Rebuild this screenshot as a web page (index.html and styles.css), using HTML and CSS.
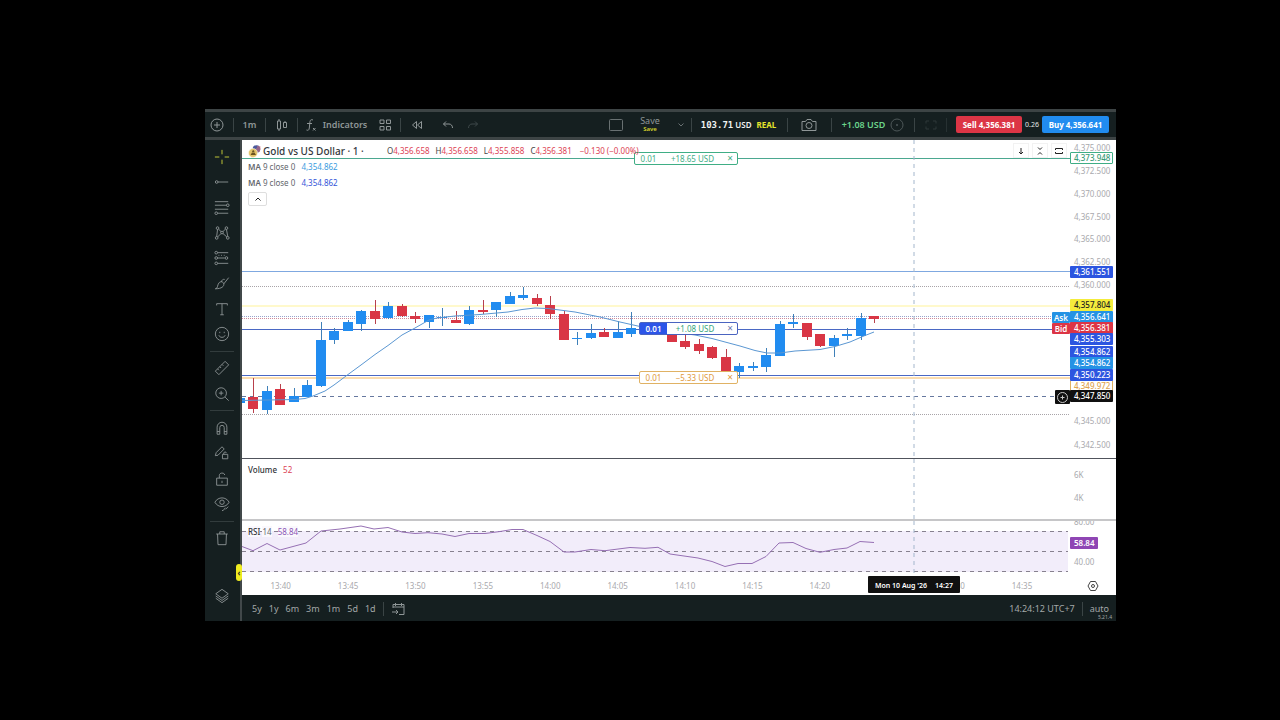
FILE: index.html
```html
<!DOCTYPE html>
<html lang="en">
<head>
<meta charset="utf-8">
<title>Gold vs US Dollar</title>
<link rel="stylesheet" href="styles.css">
</head>
<body>
<div class="app">
  <header class="topbar">
    <div class="group">
      <button class="tool add" aria-label="Add symbol"><svg width="14" height="14" viewBox="0 0 14 14"><circle cx="7" cy="7" r="6"/><path d="M7 4v6M4 7h6"/></svg></button>
      <span class="sep"></span>
      <button class="tool cell">1m</button>
      <span class="sep"></span>
      <button class="tool cell" aria-label="Candles"><svg width="12" height="14" viewBox="0 0 12 14"><path d="M1.500 3h3v8h-3zM3 1v2M3 11v2M7.500 4.500h3v5h-3zM9 3v1.500"/></svg></button>
      <span class="sep"></span>
      <button class="tool indicators"><svg width="12" height="14" viewBox="0 0 12 14"><path d="M8 2C5.500 1 5 2.500 4.800 5L4.300 10C4 12.500 3 12.500 1.500 12M2 5.500h5M8 10l2.500 2.500M10.500 10L8 12.500"/></svg>Indicators</button>
      <button class="tool cell" aria-label="Layouts"><svg width="12" height="12" viewBox="0 0 12 12"><path d="M1 1h4v3.500H1zM7.500 1h4v3.500h-4zM1 7.500h4V11H1zM7.500 7.500h4V11h-4z"/></svg></button>
      <span class="sep"></span>
      <button class="tool cell" aria-label="Replay"><svg width="12" height="10" viewBox="0 0 12 10"><path d="M5.500 1.500v7L1.500 5zM10.500 1.500v7L6.500 5z"/></svg></button>
      <button class="tool cell" aria-label="Undo"><svg width="12" height="10" viewBox="0 0 12 10"><path d="M4 1.500L1.500 4 4 6.500M1.500 4H7c2 0 3.500 1.500 3.500 4"/></svg></button>
      <button class="tool redo" aria-label="Redo"><svg width="12" height="10" viewBox="0 0 12 10"><path d="M8 1.500L10.500 4 8 6.500M10.500 4H5C3 4 1.500 5.500 1.500 8"/></svg></button>
    </div>
    <div class="group">
      <button class="tool square" aria-label="Layout setup"><svg width="14" height="12" viewBox="0 0 14 12"><rect x=".5" y=".5" width="13" height="11" rx="1"/></svg></button>
      <button class="tool save"><span>Save</span><b>Save</b></button>
      <button class="tool chevron" aria-label="Save menu"><svg width="6" height="4" viewBox="0 0 6 4"><path d="M.5 .5L3 3 5.500 .5"/></svg></button>
      <span class="sep"></span>
      <div class="balance"><b>103.71</b><strong>USD</strong><em>REAL</em></div>
      <span class="sep"></span>
      <button class="tool camera" aria-label="Snapshot"><svg width="16" height="14" viewBox="0 0 16 14"><path d="M1 3.500h3.500L6 1.500h4l1.500 2H15v9H1z"/><circle cx="8" cy="7.500" r="3"/></svg></button>
      <span class="sep"></span>
      <div class="profit">+1.08 USD<button class="tool dim" aria-label="Close positions"><svg width="14" height="14" viewBox="0 0 14 14"><circle cx="7" cy="7" r="6"/><path d="M6 7h2M7 6v2"/></svg></button></div>
      <span class="sep"></span>
      <button class="tool cell faint" aria-label="Fullscreen"><svg width="12" height="10" viewBox="0 0 12 10"><path d="M1 3.500V1h3M8 1h3v2.500M11 6.500V9H8M4 9H1V6.500"/></svg></button>
      <span class="sep faint"></span>
      <button class="order sell">Sell 4,356.381</button>
      <span class="spread">0.26</span>
      <button class="order buy">Buy 4,356.641</button>
    </div>
  </header>

  <div class="body">
    <nav class="sidebar">
      <div class="set eight">
        <button class="tool cross" aria-label="Crosshair"><svg viewBox="0 0 18 18"><path d="M9 1v5M9 12v5M1 9h5M12 9h5"/></svg></button>
        <button class="tool" aria-label="Trend line"><svg viewBox="0 0 18 18"><circle cx="3" cy="9" r="1.500"/><path d="M4.500 9H16"/></svg></button>
        <button class="tool" aria-label="Fibonacci"><svg viewBox="0 0 18 18"><path d="M1 3h15M1 7h13M1 11.500h15M4 16h12"/><circle cx="15.500" cy="7" r="1.500"/><circle cx="2.500" cy="16" r="1.500"/></svg></button>
        <button class="tool" aria-label="Patterns"><svg viewBox="0 0 18 18"><path d="M4 5l-1 8M5 4.500l3 3M10 7.500l3-3M14 5l1.500 8M4 13.500l4-4M10 9.500l4.500 4"/><circle cx="4" cy="3.500" r="1.500"/><circle cx="14" cy="3.500" r="1.500"/><circle cx="9" cy="8.500" r="1.500"/><circle cx="3" cy="14.500" r="1.500"/><circle cx="15.500" cy="14.500" r="1.500"/></svg></button>
        <button class="tool" aria-label="Prediction"><svg viewBox="0 0 18 18"><path d="M4 3h12M4 9h8M4 15h12"/><path d="M5 6h9" stroke-dasharray="1 2"/><circle cx="2.500" cy="3" r="1.500"/><circle cx="2.500" cy="9" r="1.500"/><circle cx="2.500" cy="15" r="1.500"/><circle cx="14" cy="9" r="1.500"/></svg></button>
        <button class="tool" aria-label="Brush"><svg viewBox="0 0 18 18"><path d="M1.500 15.500c3 0 2-4 4-6.500s5-1.500 5.500 1-2 5.500-9.500 5.500zM8 8c1-2.500 2-3.500 4-3M11 10l5.500-7"/></svg></button>
        <button class="tool" aria-label="Text"><svg viewBox="0 0 18 18"><path d="M3 5V3h12v2M9 3v12.500M7 15.500h4"/></svg></button>
        <button class="tool" aria-label="Emoji"><svg viewBox="0 0 18 18"><circle cx="9" cy="9" r="7.500"/><path d="M5.500 10.500c1 3 6 3 7 0M6.500 6.500v1.500M11.500 6.500v1.500"/></svg></button>
      </div>
      <span class="rule"></span>
      <div class="set two">
        <button class="tool" aria-label="Measure"><svg viewBox="0 0 18 18"><path d="M1.500 12.500l11-11 4 4-11 11zM4 10l1.500 1.500M6.500 7.500L8 9M9 5l1.500 1.500"/></svg></button>
        <button class="tool" aria-label="Zoom in"><svg viewBox="0 0 18 18"><circle cx="8" cy="8" r="6"/><path d="M12.500 12.500l4 4M8 5.500v5M5.500 8h5"/></svg></button>
      </div>
      <span class="rule"></span>
      <div class="set four">
        <button class="tool" aria-label="Magnet"><svg viewBox="0 0 18 18"><path d="M3.500 16V8a5.500 5.500 0 0 1 11 0v8h-3V8.500a2.500 2.500 0 0 0-5 0V16zM3.500 13h3M11.500 13h3"/></svg></button>
        <button class="tool" aria-label="Keep drawing"><svg viewBox="0 0 18 18"><path d="M1.500 12l1-3.500L9 2l2.500 2.500-7 7zM9.500 10.500h6v5h-6zM11 10.500V9c0-1.500 3-1.500 3 0"/></svg></button>
        <button class="tool" aria-label="Lock drawings"><svg viewBox="0 0 18 18"><path d="M3 8h12v8H3zM6 8V5c0-3.500 6-3.500 6-.5M9 11v2.500"/></svg></button>
        <button class="tool" aria-label="Hide drawings"><svg viewBox="0 0 18 18"><path d="M1 7c3.500-6.500 12.500-6.500 16 0-3.500 6.500-12.500 6.500-16 0z"/><circle cx="9" cy="7" r="2.500"/><path d="M9 16.500c3 0 2-3 4-3M13 15l3-3"/></svg></button>
      </div>
      <span class="rule"></span>
      <div class="set one">
        <button class="tool" aria-label="Remove"><svg viewBox="0 0 18 18"><path d="M2.500 4.500h13M6.500 4.500v-2.500h5v2.500M4 4.500l.5 12h9l.5-12"/></svg></button>
      </div>
      <button class="tool layers" aria-label="Object tree"><svg viewBox="0 0 18 18"><path d="M9 1.500l7 5-7 5-7-5zM2 9l7 5 7-5M2 11.500l7 5 7-5"/></svg></button>
      <button class="handle" aria-label="Collapse panel">‹</button>
    </nav>

    <main class="main">
      <section class="pane price">
        <div class="plot">
          <svg class="canvas" viewBox="242 140 828 318" preserveAspectRatio="none">
            <path class="l-teal" d="M242 158.500H1070"/>
            <path class="l-pale" d="M242 271.500H1070"/>
            <path class="l-dot" d="M242 286.500H1070M242 414.500H1070"/>
            <path class="l-yellow" d="M242 306H1070"/>
            <path class="l-dot ask-line" d="M242 316.500H1070"/>
            <path class="l-dot bid-line" d="M242 318.500H1070"/>
            <path class="l-orange" d="M242 378H1070"/>
            <path class="l-blue" d="M242 329.500H1070M242 375.500H1070"/>
            <path class="l-dash" d="M242 396.500H1070"/>
            <g id="candles"></g>
            <path class="l-ma" d="M242 400.500L295 399.500 305 398.500 313 396 325 391 334 385 348 374.500 361 365 375 354.500 388 345.500 402 335 415 328 429 320 437 318 455 316 480 314.500 508 312 522 309.500 535 308 548 308.500 575 312 600 317 620 322 640 326.500 665 331 695 335 712 338.500 740 346 755 350.500 767 353 780 353 795 351 820 349.500 835 346.500 850 342 865 335.500 874 332"/>
            <path class="l-cross" d="M914 140V458"/>
          </svg>
          <div class="tag take"><b>0.01</b><span>+18.65 USD</span><button aria-label="Cancel take profit">×</button></div>
          <div class="tag position"><b>0.01</b><span>+1.08 USD</span><button aria-label="Close position">×</button></div>
          <div class="tag stop"><b>0.01</b><span>−5.33 USD</span><button aria-label="Cancel stop loss">×</button></div>
          <div class="legend">
            <div class="title">
              <svg width="13" height="13" viewBox="0 0 13 13"><circle cx="8.500" cy="4" r="3.800" fill="#4c5a9c"/><path d="M9 2h3.500M8 4h4.500M8 6h4" stroke="#d9727b"/><circle cx="5" cy="8" r="4.500" fill="#e3c368" stroke="#fff" stroke-width=".5"/><path d="M2.500 10L4 7.500h2.500L8 10zM4 7l.7-1.800h1.200L6.500 7z" fill="#6b5420"/></svg>
              <h1>Gold vs US Dollar · 1 ·</h1>
              <p class="ohlc"><span>O<i>4,356.658</i></span><span>H<i>4,356.658</i></span><span>L<i>4,355.858</i></span><span>C<i>4,356.381</i></span><i>−0.130 (−0.00%)</i></p>
            </div>
            <p class="study"><b>MA</b> 9 close 0 <span class="sky">4,354.862</span></p>
            <p class="study"><b>MA</b> 9 close 0 <span class="royal">4,354.862</span></p>
            <button class="collapse" aria-label="Collapse legend"><svg width="6" height="4" viewBox="0 0 6 4"><path d="M.5 3.500L3 1l2.500 2.500"/></svg></button>
          </div>
          <div class="pane-tools">
            <button aria-label="Move pane down"><svg width="8" height="8" viewBox="0 0 8 8"><path d="M4 1v6M2 5l2 2 2-2"/></svg></button>
            <button aria-label="Collapse pane"><svg width="8" height="8" viewBox="0 0 8 8"><path d="M2 .5l2 2 2-2M2 7.500l2-2 2 2"/></svg></button>
            <button aria-label="Maximise pane"><svg width="8" height="8" viewBox="0 0 8 8"><path d="M.5 3V1.500h7V3M.5 5v1.500h7V5"/></svg></button>
          </div>
          <span class="side ask">Ask</span>
          <span class="side bid">Bid</span>
          <button class="side plus" aria-label="Add alert"><svg width="11" height="11" viewBox="0 0 11 11"><circle cx="5.500" cy="5.500" r="5"/><path d="M5.500 3.500v4M3.500 5.500h4"/></svg></button>
        </div>
        <div class="scale" id="prices"></div>
      </section>

      <section class="pane volume">
        <div class="plot">
          <svg class="canvas" viewBox="242 459 828 60" preserveAspectRatio="none"><path class="l-cross" d="M914 459V519"/></svg>
          <p class="study name"><b class="ink">Volume</b> <span class="red">52</span></p>
        </div>
        <div class="scale"><span style="top:15px">6K</span><span style="top:38px">4K</span></div>
      </section>

      <section class="pane rsi">
        <div class="plot">
          <svg class="canvas" viewBox="242 521 828 52" preserveAspectRatio="none">
            <rect class="band" x="242" y="531" width="826" height="41"/>
            <path class="l-band" d="M242 531.500H1068M242 551.500H1068M242 571.500H1068"/>
            <path class="l-rsi" d="M242 546.500L253 550.700 267 543.500 280 550 293 546.500 306 543 321 531 340 529 361 526 374 529 388 527.500 402 532 415 533.500 428 532.700 442 534 455 536.500 469 533.500 485 533.500 500 531.500 512 529.500 523 529.500 537 535.500 550 541.500 564 552 575 552 591 549.500 605 550.700 630 547.500 645 548.300 658 547.300 670 554 698 558 712 561.500 725 566.500 738 563.500 752 563.500 766 556.500 779 543 793 542.500 806 548.500 820 552.300 834 549.500 847 548 860 541.500 874 542.500"/>
            <path class="l-cross" d="M914 521V573"/>
          </svg>
          <p class="study name"><b class="ink">RSI</b> <span class="len">14</span> <span class="purple">58.84</span></p>
        </div>
        <div class="scale"><span style="top:0px">80.00</span><span class="chip violet" style="top:21px">58.84</span><span style="top:40px">40.00</span></div>
      </section>

      <div class="times">
        <div class="ticks"><span>13:40</span><span>13:45</span><span>13:50</span><span>13:55</span><span>14:00</span><span>14:05</span><span>14:10</span><span>14:15</span><span>14:20</span><span></span><span>14:30</span><span>14:35</span><div class="stamp"><span>Mon 10 Aug '26</span><span>14:27</span></div></div>
        <button class="gear" aria-label="Axis settings"><svg width="12" height="12" viewBox="0 0 12 12"><path d="M3.500 1.500h5L11 6l-2.500 4.500h-5L1 6z"/><circle cx="6" cy="6" r="1.500"/></svg></button>
      </div>

      <footer class="footer">
        <button>5y</button><button>1y</button><button>6m</button><button>3m</button><button>1m</button><button>5d</button><button>1d</button>
        <span class="sep"></span>
        <button class="goto" aria-label="Go to date"><svg width="14" height="14" viewBox="0 0 14 14"><path d="M2 6V2.500h11v10H8M2 5h11M4.500 1v3M10.500 1v3M1 10h6M5 8l2 2-2 2"/></svg></button>
        <span class="clock">14:24:12 UTC+7</span>
        <span class="sep"></span>
        <button class="auto">auto</button>
        <small>5.21.4</small>
      </footer>
    </main>
  </div>
</div>
<script src="chart.js"></script>
</body>
</html>
```

FILE: styles.css
```css
* { box-sizing: border-box; }
body {
  margin: 0;
  background: #000;
  color: #a3a8a8;
  font: 8px/12px "Noto Sans", "Open Sans", sans-serif;
}
button {
  margin: 0;
  padding: 0;
  border: 0;
  background: none;
  color: inherit;
  font: inherit;
}
p, h1 { margin: 0; }
i, em { font-style: normal; }
svg { display: block; fill: none; stroke: currentColor; }

.app {
  display: flex;
  flex-direction: column;
  min-height: 100vh;
  padding: 109px 164px 99px 205px;
}

/* Top toolbar */
.topbar {
  display: flex;
  justify-content: space-between;
  height: 31px;
  border-top: 3px solid #3d4445;
  border-bottom: 3px solid #3d4445;
  background: #151f20;
  font-size: 9px;
}
.group { display: flex; align-items: center; }
.tool { display: flex; align-items: center; justify-content: center; color: #8f9697; }
.cell { width: 31px; font-weight: 600; }
.add { width: 24px; margin-right: 4px; }
.sep { width: 1px; height: 14px; background: #3a4445; }
.indicators { gap: 6px; width: 72px; padding-left: 4px; font-weight: 600; }
.indicators + .cell { width: 30px; }
.redo { width: 20px; color: #3f494a; }
.square { width: 28px; color: #697172; }
.save { flex-direction: column; width: 40px; line-height: 8px; }
.save b { color: #d8d82c; font-size: 6px; line-height: 8px; font-weight: 600; }
.chevron { width: 21px; color: #697172; }
.balance { display: flex; justify-content: center; width: 95px; padding-right: 2px; color: #f0f2f2; font-size: 8px; }
.balance b { margin-right: 2px; font: bold 9px/12px "DejaVu Sans Mono", monospace; }
.balance strong { margin-right: 5px; font-weight: 600; }
.balance em { color: #e6e62c; font-weight: bold; }
.camera { width: 43px; padding-right: 2px; }
.profit { display: flex; align-items: center; justify-content: center; gap: 5px; width: 82px; color: #6bd58c; font-weight: 600; }
.dim { color: #4d5758; }
.faint { color: #2e3839; }
.sep.faint { margin-right: 9px; background: #273132; }
.order { height: 17px; border-radius: 2px; color: #fff; font-size: 8px; font-weight: bold; white-space: nowrap; }
.sell { width: 66px; background: #dc3545; }
.buy { width: 67px; margin-right: 7px; background: #218cf0; }
.spread { width: 20px; color: #e4e7e7; font-size: 7px; text-align: center; }

/* Drawing tools */
.body { display: flex; flex: 1; }
.sidebar {
  position: relative;
  display: flex;
  flex-direction: column;
  align-items: center;
  width: 37px;
  padding: 4px 1px 17px 0;
  border-right: 2px solid #41484a;
  background: #151f20;
}
.sidebar svg { width: 16px; height: 16px; stroke-width: 1; }
.set { display: flex; flex-direction: column; justify-content: space-around; }
.eight { flex: 8 1 0; }
.two { flex: 2 1 0; }
.four { flex: 4 1 0; }
.one { flex: 1 1 0; }
.rule { width: 24px; height: 1px; margin: 4px 0; background: #323c3d; }
.cross { color: #d2d83c; }
.layers { margin-top: 37px; }
.handle {
  position: absolute;
  right: -2px;
  bottom: 40px;
  width: 6px;
  height: 17px;
  border-radius: 3px;
  background: #f0ec20;
  color: #222;
  font: bold 8px/12px "Noto Sans", sans-serif;
}

/* Chart panes */
.main { display: flex; flex: 1; flex-direction: column; min-width: 0; background: #fff; }
.pane { display: flex; overflow: hidden; }
.price { flex: 318 1 0; border-bottom: 1px solid #50535c; }
.volume { flex: 60 1 0; border-bottom: 2px solid #c6c6c8; }
.rsi { flex: 52 1 0; }
.plot { position: relative; flex: 1; }
.canvas { position: absolute; width: 100%; height: 100%; }
.canvas path { vector-effect: non-scaling-stroke; }
.l-teal { stroke: #4ba890; }
.l-pale { stroke: #7fa8e0; }
.l-dot { stroke: #a8a4a8; stroke-dasharray: 1 1; }
.ask-line { stroke: #98a4cc; }
.bid-line { stroke: #d08a9a; }
.l-yellow { stroke: #fff9cc; stroke-width: 2; }
.l-orange { stroke: #fbdcae; stroke-width: 2; }
.l-blue { stroke: #4a68c4; }
.l-dash { stroke: #66789f; stroke-dasharray: 4 4; }
.l-ma { stroke: #5b97d2; }
.l-cross { stroke: #a3b6cc; stroke-dasharray: 4 4; }
.band { fill: #f2edfa; stroke: none; }
.l-band { stroke: #87818f; stroke-dasharray: 4 4; }
.l-rsi { stroke: #9670b4; }
.up { color: #218cf0; }
.down { color: #d93645; }
.up rect, .down rect { fill: currentColor; stroke: none; }
.up path { stroke: #3f80b8; }
.down path { stroke: #b8404c; }

.legend { position: absolute; top: 4px; left: 6px; }
.title { display: flex; align-items: center; height: 14px; }
.title svg { stroke: none; }
.title h1 { width: 123px; padding-left: 2px; color: #33373c; font-size: 10px; font-weight: 500; white-space: nowrap; }
.ohlc { display: flex; gap: 6px; margin-left: 3px; color: #444; white-space: nowrap; }
.ohlc i, .red { color: #dc4254; }
.ohlc > i { margin-left: 2px; }
.study { height: 16px; padding-top: 3px; color: #62666c; white-space: nowrap; }
.study b { font-weight: 600; }
.study span { margin-left: 4px; }
.study .ink { color: #303338; font-weight: 500; }
.study .sky { color: #3a9ce0; }
.study .royal { color: #3355d8; }
.purple { color: #8b55b4; }
.collapse {
  display: grid;
  place-items: center;
  width: 19px;
  height: 14px;
  margin-top: 2px;
  border: 1px solid #dedede;
  border-radius: 2px;
  background: #fff;
  color: #222;
}
.name { position: absolute; top: 2px; left: 6px; }
.rsi .name b, .rsi .name span { background: #faf8fd; }
.study .len { margin-left: 0; }
.pane-tools { position: absolute; top: 3px; right: 3px; display: flex; gap: 3px; color: #222; }
.pane-tools button {
  display: grid;
  place-items: center;
  width: 16px;
  height: 15px;
  border: 1px solid #f2f2f2;
  background: #fff;
}

/* Order labels on the price lines */
.tag {
  position: absolute;
  right: 332px;
  display: flex;
  align-items: center;
  width: 99px;
  height: 13px;
  border: 1px solid;
  border-radius: 2px;
  background: #fff;
  line-height: 11px;
}
.tag b { width: 27px; font-weight: 400; text-align: center; }
.tag span { flex: 1; text-align: center; }
.tag button { width: 14px; font-size: 10px; }
.take { top: 12px; width: 104px; color: #3fae85; }
.position { top: 182px; border-color: #4a64c0; color: #35a57c; }
.position b { align-self: stretch; background: #2c55e8; color: #fff; font-weight: 600; }
.position button { color: #6b78b0; }
.stop { top: 231px; border-color: #e0b264; color: #e09a3c; }
.side {
  position: absolute;
  right: 0;
  width: 18px;
  height: 11px;
  border-radius: 1px;
  color: #fff;
  font-weight: 600;
  line-height: 11px;
  text-align: center;
}
.ask { top: 172px; background: #2492e4; }
.bid { top: 183px; background: #dc3545; }
.side.plus { top: 250px; display: grid; place-items: center; width: 15px; height: 14px; background: #101010; }
.plus svg { color: #c8c8c8; }

/* Value scale */
.scale { position: relative; width: 46px; color: #a9a9ad; }
.scale span { position: absolute; left: 0; width: 43px; height: 12px; padding-left: 4px; margin-top: -6px; line-height: 12px; }
.volume .scale span, .rsi .scale span { margin-top: -5px; }
.scale .chip { border-radius: 1px; color: #fff; font-weight: 500; }
.scale .teal { padding-left: 3px; border: 1px solid #3fae85; background: #fff; color: #3a9c78; line-height: 10px; }
.scale .amber { padding-left: 3px; border: 1px solid #e0b264; background: #fff; color: #e0a450; line-height: 10px; }
.scale .blue { background: #2c55e0; }
.scale .azure { background: #2492e4; }
.scale .crimson { background: #dc3545; }
.scale .lemon { background: #f4ec3c; color: #222; }
.scale .black { background: #101010; }
.scale .violet { width: 28px; background: #8f46b4; font-weight: 600; }

/* Time scale */
.times { display: flex; height: 22px; color: #a9a9ad; }
.ticks { position: relative; display: flex; flex: 1; align-items: center; padding: 3px 0 0 5px; }
.ticks > span { flex: 0 0 8.19%; text-align: center; }
.stamp {
  position: absolute;
  top: 3px;
  right: 110px;
  display: flex;
  gap: 8px;
  justify-content: center;
  width: 92px;
  height: 17px;
  border-radius: 1px;
  background: #101010;
  color: #fff;
  font-size: 7px;
  font-weight: 600;
  line-height: 20px;
  white-space: nowrap;
}
.gear { display: grid; place-items: center; width: 46px; padding-top: 4px; color: #444; }

/* Range bar */
.footer {
  position: relative;
  display: flex;
  align-items: center;
  gap: 7px;
  height: 26px;
  padding: 1px 7px 0 10px;
  background: #151f20;
  font-size: 9px;
}
.footer .goto { display: grid; place-items: center; color: #8f9697; }
.clock { margin-left: auto; }
.footer small { position: absolute; right: 4px; bottom: 0; font-size: 5px; line-height: 7px; }
```

FILE: chart.js
```js
// [index, body top, body bottom, wick top, wick bottom, direction]
const candles = [
  [-1, 398, 403, 398, 403, 'up'], [0, 397, 409, 378, 413, 'down'], [1, 391, 410, 386, 414, 'up'],
  [2, 389, 405, 384, 405, 'down'], [3, 396, 402, 388, 402, 'up'], [4, 385, 397, 380, 397, 'up'],
  [5, 340, 386, 322, 387, 'up'], [6, 331, 340, 328, 344, 'up'], [7, 322, 331, 320, 331, 'up'],
  [8, 311, 324, 310, 331, 'up'], [9, 311, 319, 300, 324, 'down'], [10, 306, 318, 302, 319, 'up'],
  [11, 306, 316, 304, 317, 'down'], [12, 316, 319, 312, 323, 'down'], [13, 315, 322, 315, 328, 'up'],
  [14, 317, 318, 308, 326, 'up'], [15, 320, 323, 311, 323, 'down'], [16, 310, 324, 306, 325, 'up'],
  [17, 310, 312, 300, 314, 'down'], [18, 302, 310, 302, 317, 'up'], [19, 296, 304, 292, 304, 'up'],
  [20, 295, 298, 287, 300, 'up'], [21, 298, 304, 294, 306, 'down'], [22, 305, 314, 296, 319, 'down'],
  [23, 314, 340, 311, 340, 'down'], [24, 338, 339, 332, 345, 'up'], [25, 333, 338, 324, 339, 'up'],
  [26, 332, 337, 328, 337, 'down'], [27, 332, 338, 321, 338, 'up'], [28, 328, 334, 312, 337, 'up'],
  [31, 331, 342, 331, 342, 'down'], [32, 341, 347, 335, 349, 'down'], [33, 344, 351, 339, 354, 'down'],
  [34, 347, 358, 346, 359, 'down'], [35, 357, 371, 349, 371, 'down'], [36, 366, 372, 363, 378, 'up'],
  [37, 366, 368, 362, 371, 'up'], [38, 355, 367, 348, 372, 'up'], [39, 324, 356, 321, 356, 'up'],
  [40, 322, 324, 314, 328, 'up'], [41, 323, 337, 323, 340, 'down'], [42, 334, 346, 334, 347, 'down'],
  [43, 338, 346, 335, 357, 'up'], [44, 334, 336, 328, 340, 'up'], [45, 318, 336, 313, 340, 'up'],
  [46, 316, 319, 316, 323, 'down']
];
document.getElementById('candles').innerHTML = candles.map(([i, top, bottom, high, low, dir]) => {
  const x = Math.round(253 + 13.5 * i);
  return `<g class="${dir}"><path d="M${x + 0.5} ${high}V${low}"/>` +
    `<rect x="${x - 5}" y="${top}" width="10" height="${bottom - top}"/></g>`;
}).join('');

// [label, centre on the scale, chip colour]
const prices = [
  ['4,375.000', 8], ['4,372.500', 31], ['4,370.000', 54], ['4,367.500', 77], ['4,365.000', 99],
  ['4,362.500', 122], ['4,360.000', 145], ['4,345.000', 281], ['4,342.500', 305],
  ['4,373.948', 18, 'teal'], ['4,361.551', 132, 'blue'], ['4,357.804', 165, 'lemon'],
  ['4,356.641', 177, 'azure'], ['4,356.381', 188, 'crimson'], ['4,355.303', 199, 'blue'],
  ['4,354.862', 212, 'blue'], ['4,354.862', 223, 'azure'], ['4,349.972', 246, 'amber'],
  ['4,350.223', 235, 'blue'], ['4,347.850', 256, 'black']
];
document.getElementById('prices').innerHTML = prices.map(([text, y, chip]) =>
  `<span class="${chip ? 'chip ' + chip : ''}" style="top:${y}px">${text}</span>`).join('');
```
